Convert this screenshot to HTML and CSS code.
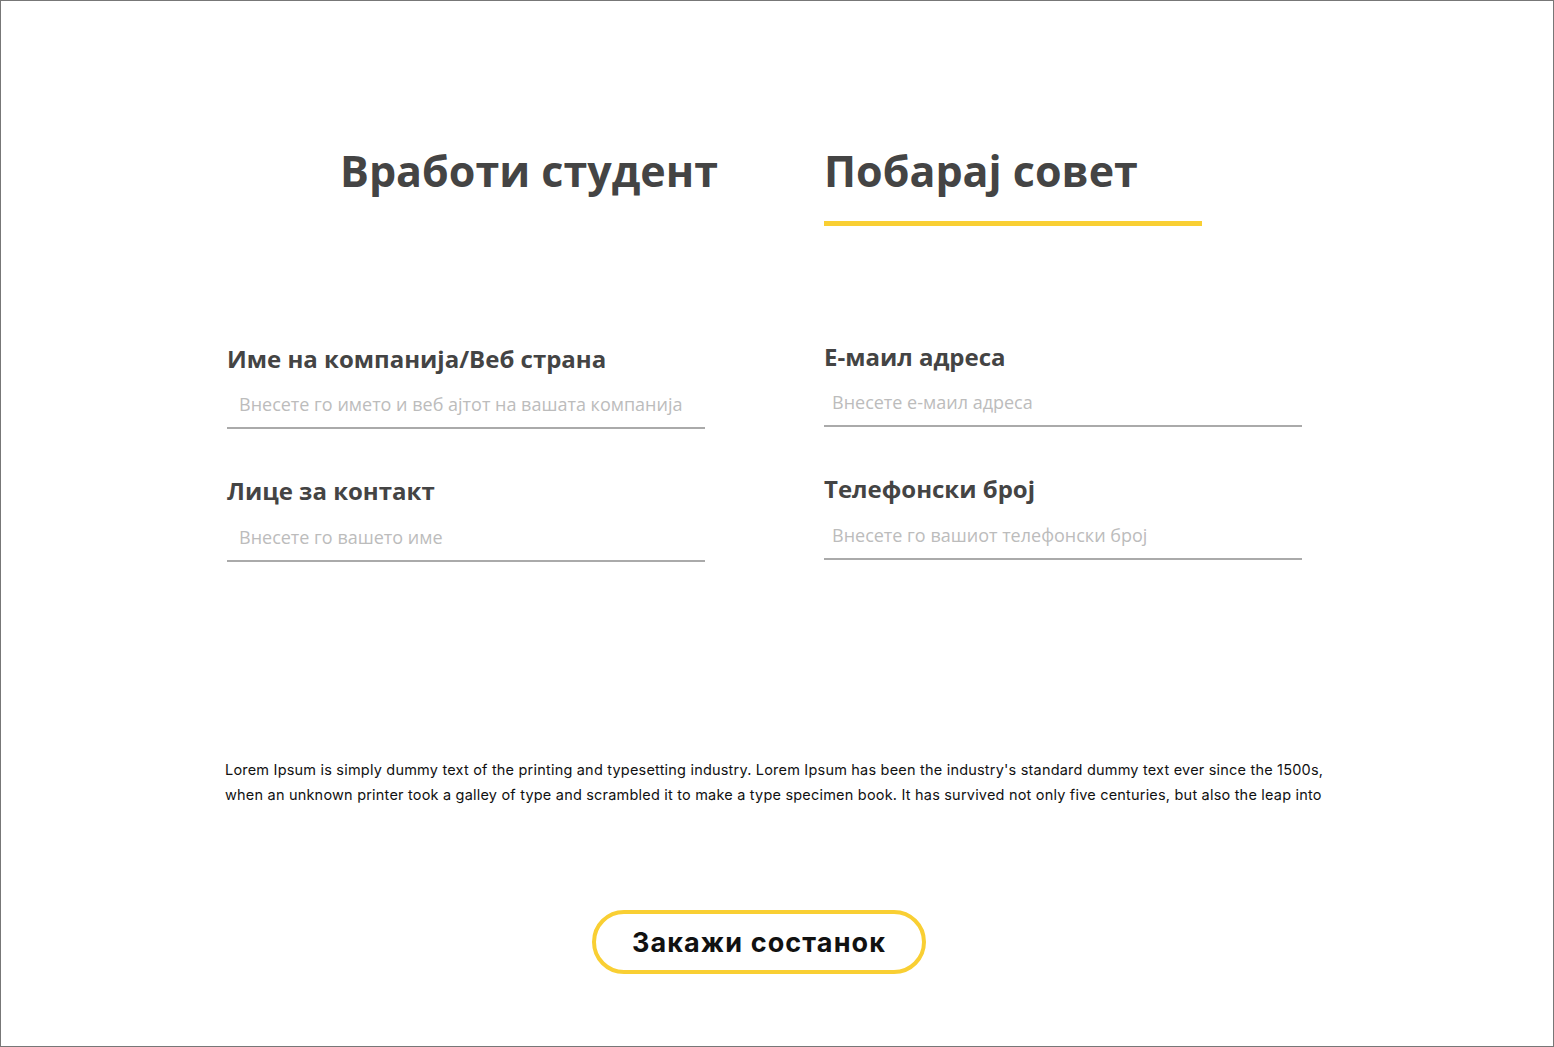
FILE: index.html
```html
<!DOCTYPE html>
<html>
<head>
<meta charset="utf-8">
<title>Побарај совет</title>
<link rel="stylesheet" href="styles.css">
</head>
<body>
<div class="frame">
  <nav class="tabs">
    <a class="tab">Вработи студент</a>
    <a class="tab active">Побарај совет</a>
  </nav>

  <form class="form">
    <div class="col col-left">
      <label class="field">
        <span class="label">Име на компанија/Веб страна</span>
        <input class="input" type="text" placeholder="Внесете го името и веб ајтот на вашата компанија">
      </label>
      <label class="field">
        <span class="label">Лице за контакт</span>
        <input class="input" type="text" placeholder="Внесете го вашето име">
      </label>
    </div>
    <div class="col col-right">
      <label class="field">
        <span class="label">Е-маил адреса</span>
        <input class="input" type="email" placeholder="Внесете е-маил адреса">
      </label>
      <label class="field">
        <span class="label">Телефонски број</span>
        <input class="input" type="tel" placeholder="Внесете го вашиот телефонски број">
      </label>
    </div>
  </form>

  <p class="lorem">Lorem Ipsum is simply dummy text of the printing and typesetting industry. Lorem Ipsum has been the industry's standard dummy text ever since the 1500s,<br>when an unknown printer took a galley of type and scrambled it to make a type specimen book. It has survived not only five centuries, but also the leap into</p>

  <div class="actions">
    <button class="btn" type="button">Закажи состанок</button>
  </div>
</div>
</body>
</html>
```

FILE: styles.css
```css
* { box-sizing: border-box; }

html, body {
  margin: 0;
  padding: 0;
  background: #fff;
}

.frame {
  width: 1554px;
  height: 1047px;
  border: 1px solid #777;
  overflow: hidden;
  font-family: "Open Sans", "Noto Sans", sans-serif;
  font-feature-settings: "locl" 0;
}

.tabs {
  display: flex;
  gap: 106px;
  margin-top: 144px;
  padding-left: 339px;
}

.tab {
  width: 378px;
  font-size: 43px;
  font-weight: 700;
  line-height: 1.2;
  color: #444;
  padding-bottom: 24px;
  border-bottom: 5px solid transparent;
}

.tab.active {
  border-bottom-color: #f9cf33;
}

.form {
  display: grid;
  grid-template-columns: 478px 478px;
  column-gap: 119px;
  margin-top: 119px;
  padding-left: 226px;
}

.col {
  display: flex;
  flex-direction: column;
  gap: 48px;
}

.col-right {
  margin-top: -2px;
}

.field {
  display: flex;
  flex-direction: column;
  gap: 8px;
}

.label {
  font-size: 24px;
  font-weight: 700;
  line-height: 1.2;
  color: #444;
}

.input {
  height: 48px;
  border: none;
  border-bottom: 2px solid #aaa;
  padding: 0 12px;
  font-family: "Open Sans", "Noto Sans", sans-serif;
  font-size: 18px;
  color: #444;
  outline: none;
  background: transparent;
}

.col-right .input {
  padding: 0 8px;
}

.input::placeholder {
  color: #bcbcbc;
}

.lorem {
  margin: 195px 0 0 224px;
  font-family: "Inter", "Noto Sans", sans-serif;
  font-size: 14.5px;
  letter-spacing: 0.2px;
  line-height: 25px;
  color: #111;
  white-space: nowrap;
}

.actions {
  margin-top: 103px;
  padding-left: 591px;
}

.btn {
  width: 334px;
  height: 64px;
  border: 4px solid #f9cf33;
  border-radius: 32px;
  background: #fff;
  font-family: "Inter", "Noto Sans", sans-serif;
  font-size: 27px;
  font-weight: 700;
  letter-spacing: 1.1px;
  color: #111;
  padding: 0;
}
```
